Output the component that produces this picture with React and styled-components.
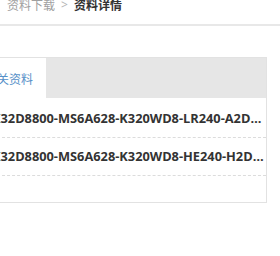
import React from 'react';
import styled, { createGlobalStyle } from 'styled-components';

const Global = createGlobalStyle`
  html, body {
    margin: 0;
    padding: 0;
    background: #fff;
    overflow: hidden;
  }
  body {
    font-family: "Open Sans", "Noto Sans CJK SC", sans-serif;
  }
`;

const App = () => {
  return (
    <Page>
      <Global />
      <Shift>
        <Crumbs>
          <CrumbLink>资料下载</CrumbLink>
          <Sep>&gt;</Sep>
          <CrumbNow>资料详情</CrumbNow>
        </Crumbs>
        <Panel>
          <Tabs>
            <Tab active>相关资料</Tab>
          </Tabs>
          <List>
            {FILES.map((name, idx) => (
              <Row key={idx}>{name}</Row>
            ))}
          </List>
        </Panel>
      </Shift>
    </Page>
  );
};

const Page = styled.div`
  width: 280px;
  height: 256px;
  overflow: hidden;
`;
const Shift = styled.div`
  margin: -4px 0 0 -29px;
`;
const Crumbs = styled.div`
  display: flex;
  align-items: center;
  gap: 6px;
  padding: 0 0 10px 36px;
  height: 30px;
  border-bottom: 2px solid #e8e8e8;
  width: 330px;
  box-sizing: border-box;
  font-family: "Noto Sans CJK SC", sans-serif;
  font-size: 12px;
  line-height: 16px;
`;
const CrumbLink = styled.span`
  color: #a0a0a0;
`;
const Sep = styled.span`
  color: #b5b5b5;
  font-family: "Open Sans", sans-serif;
`;
const CrumbNow = styled.span`
  color: #333;
  font-weight: 700;
`;
const Panel = styled.section`
  margin-top: 31px;
  width: 296px;
  border: 1px solid #e2e2e2;
  box-sizing: border-box;
  padding-bottom: 26px;
`;
const Tabs = styled.div`
  display: flex;
  height: 40px;
  background: #e6e6e6;
`;
const Tab = styled.div`
  display: flex;
  align-items: center;
  padding: 0 13px;
  background: ${(props) => (props.active ? '#fff' : 'transparent')};
  color: ${(props) => (props.active ? '#5590c8' : '#666')};
  font-family: "Noto Sans CJK SC", sans-serif;
  font-size: 12px;
`;
const List = styled.ul`
  list-style: none;
  margin: 0;
  padding: 2px 0 0 20px;
`;
const Row = styled.li`
  height: 37px;
  line-height: 37px;
  border-bottom: 1px dashed #dcdcdc;
  color: #333;
  font-size: 12.8px;
  font-weight: 700;
  white-space: nowrap;
  overflow: hidden;
  text-overflow: ellipsis;
`;

const FILES = [
  'K32D8800-MS6A628-K320WD8-LR240-A2D8800-DATASHEET',
  'K32D8800-MS6A628-K320WD8-HE240-H2D8800-MANUAL',
];

export default App;
